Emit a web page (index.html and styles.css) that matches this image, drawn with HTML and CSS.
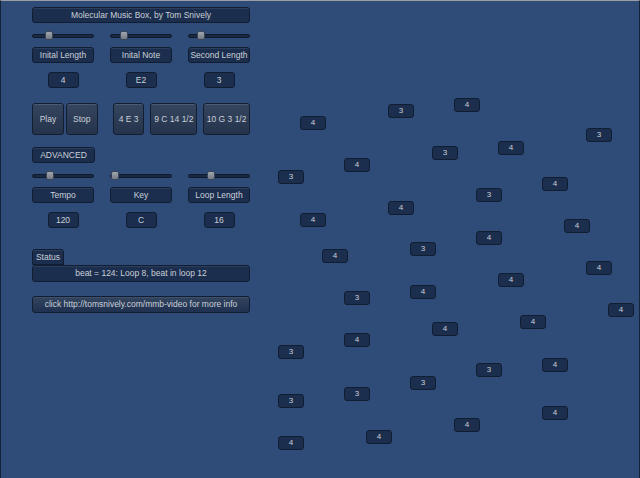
FILE: index.html
```html
<!DOCTYPE html>
<html>
<head>
<meta charset="utf-8">
<link rel="stylesheet" href="styles.css">
</head>
<body>
<div class="screen">
  <div class="panel">
    <div class="bar title">Molecular Music Box, by Tom Snively</div>

    <div class="grid3 sliders s1">
      <div class="slider"><span class="thumb" style="left:12px"></span></div>
      <div class="slider"><span class="thumb" style="left:9px"></span></div>
      <div class="slider"><span class="thumb" style="left:8px"></span></div>
    </div>
    <div class="grid3 labels">
      <div class="bar">Inital Length</div>
      <div class="bar">Inital Note</div>
      <div class="bar">Second Length</div>
    </div>
    <div class="grid3 values">
      <div class="val">4</div>
      <div class="val">E2</div>
      <div class="val">3</div>
    </div>

    <div class="btnrow">
      <div class="btn w31">Play</div>
      <div class="btn w31 g3">Stop</div>
      <div class="btn w31 g16">4 E 3</div>
      <div class="btn w46 g7">9 C 14 1/2</div>
      <div class="btn w46 g7">10 G 3 1/2</div>
    </div>

    <div class="bar adv">ADVANCED</div>

    <div class="grid3 sliders s2">
      <div class="slider"><span class="thumb" style="left:13px"></span></div>
      <div class="slider"><span class="thumb" style="left:0px"></span></div>
      <div class="slider"><span class="thumb" style="left:18px"></span></div>
    </div>
    <div class="grid3 labels">
      <div class="bar">Tempo</div>
      <div class="bar">Key</div>
      <div class="bar">Loop Length</div>
    </div>
    <div class="grid3 values">
      <div class="val">120</div>
      <div class="val">C</div>
      <div class="val">16</div>
    </div>

    <div class="bar status">Status</div>
    <div class="bar beat">beat = 124: Loop 8, beat in loop 12</div>
    <div class="bar link">click http://tomsnively.com/mmb-video for more info</div>
  </div>

  <div class="canvas">
    <div class="node" style="left:300px;top:116px">4</div>
    <div class="node" style="left:388px;top:104px">3</div>
    <div class="node" style="left:454px;top:98px">4</div>
    <div class="node" style="left:586px;top:128px">3</div>
    <div class="node" style="left:432px;top:146px">3</div>
    <div class="node" style="left:498px;top:141px">4</div>
    <div class="node" style="left:344px;top:158px">4</div>
    <div class="node" style="left:278px;top:170px">3</div>
    <div class="node" style="left:542px;top:177px">4</div>
    <div class="node" style="left:476px;top:188px">3</div>
    <div class="node" style="left:388px;top:201px">4</div>
    <div class="node" style="left:300px;top:213px">4</div>
    <div class="node" style="left:564px;top:219px">4</div>
    <div class="node" style="left:476px;top:231px">4</div>
    <div class="node" style="left:410px;top:242px">3</div>
    <div class="node" style="left:322px;top:249px">4</div>
    <div class="node" style="left:586px;top:261px">4</div>
    <div class="node" style="left:498px;top:273px">4</div>
    <div class="node" style="left:410px;top:285px">4</div>
    <div class="node" style="left:344px;top:291px">3</div>
    <div class="node" style="left:608px;top:303px">4</div>
    <div class="node" style="left:520px;top:315px">4</div>
    <div class="node" style="left:432px;top:322px">4</div>
    <div class="node" style="left:344px;top:333px">4</div>
    <div class="node" style="left:278px;top:345px">3</div>
    <div class="node" style="left:542px;top:358px">4</div>
    <div class="node" style="left:476px;top:363px">3</div>
    <div class="node" style="left:410px;top:376px">3</div>
    <div class="node" style="left:344px;top:387px">3</div>
    <div class="node" style="left:278px;top:394px">3</div>
    <div class="node" style="left:542px;top:406px">4</div>
    <div class="node" style="left:454px;top:418px">4</div>
    <div class="node" style="left:366px;top:430px">4</div>
    <div class="node" style="left:278px;top:436px">4</div>
  </div>
</div>
</body>
</html>
```

FILE: styles.css
```css
html, body {
  margin: 0;
  padding: 0;
  background: #2f4c78;
}
.screen {
  position: relative;
  width: 640px;
  height: 478px;
  box-sizing: border-box;
  background: #2f4c78;
  border-top: 1px solid #9a9ea4;
  border-left: 1px solid #15233a;
  border-right: 1px solid #15233a;
  overflow: hidden;
  font-family: "Liberation Sans", Arial, sans-serif;
  font-size: 8.5px;
  color: #c9d0da;
}
.panel {
  width: 218px;
  padding: 6px 0 0 31px;
  display: flex;
  flex-direction: column;
}
.bar {
  box-sizing: border-box;
  height: 15px;
  line-height: 13px;
  text-align: center;
  background: #1c2e4d;
  border: 1px solid #111d32;
  border-radius: 3px;
  box-shadow: inset 0 1px 0 rgba(120,140,170,0.18);
  white-space: nowrap;
}
.title {
  height: 16px;
  line-height: 14px;
}
.grid3 {
  display: grid;
  grid-template-columns: 62px 62px 62px;
  column-gap: 16px;
}
.sliders {
  height: 9px;
  align-items: center;
}
.s1 { margin-top: 8px; }
.s2 { margin-top: 8px; }
.slider {
  position: relative;
  height: 4px;
  box-sizing: border-box;
  background: #1a2a44;
  border: 1px solid #0f1a2d;
  border-radius: 2px;
}
.thumb {
  position: absolute;
  top: -4px;
  width: 8px;
  height: 9px;
  box-sizing: border-box;
  background: linear-gradient(#a0a6ae, #737b86);
  border: 1px solid #3a4558;
  border-radius: 2px;
}
.labels { margin-top: 7px; }
.labels .bar { height: 16px; line-height: 14px; }
.values { margin-top: 9px; justify-items: center; }
.val {
  box-sizing: border-box;
  width: 31px;
  height: 16px;
  line-height: 14px;
  text-align: center;
  background: #1c2e4d;
  border: 1px solid #111d32;
  border-radius: 3px;
}
.btnrow {
  display: flex;
  margin-top: 15px;
}
.btn {
  box-sizing: border-box;
  height: 32px;
  line-height: 30px;
  text-align: center;
  background: linear-gradient(#35455e, #25344c);
  border: 1px solid #131e31;
  border-radius: 3px;
  box-shadow: inset 0 1px 0 rgba(160,175,200,0.22);
  white-space: nowrap;
}
.w31 { width: 32px; }
.w46 { width: 47px; }
.g3 { margin-left: 2px; }
.g16 { margin-left: 15px; }
.g7 { margin-left: 6px; }
.adv {
  width: 63px;
  margin-top: 12px;
  height: 16px;
  line-height: 14px;
}
.status {
  width: 32px;
  margin-top: 21px;
  height: 16px;
  line-height: 14px;
  border-radius: 3px 3px 0 0;
}
.beat {
  height: 17px;
  line-height: 15px;
}
.link {
  margin-top: 14px;
  height: 17px;
  line-height: 15px;
  background: linear-gradient(#34455f, #1f3050);
}
.canvas {
  position: absolute;
  left: 0;
  top: 0;
  width: 100%;
  height: 100%;
  pointer-events: none;
}
.node {
  position: absolute;
  box-sizing: border-box;
  width: 26px;
  height: 14px;
  line-height: 12px;
  text-align: center;
  background: #1c2e4d;
  border: 1px solid #111d32;
  border-radius: 3px;
  font-size: 8px;
  margin-left: -1px;
  margin-top: -1px;
}
```
